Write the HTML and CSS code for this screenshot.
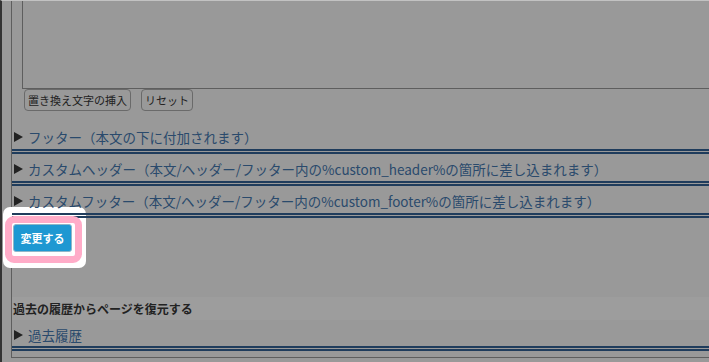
FILE: index.html
```html
<!DOCTYPE html>
<html lang="ja">
<head>
<meta charset="utf-8">
<link rel="stylesheet" href="styles.css">
</head>
<body>
<div class="page">
  <div class="panel">
    <div class="editor">
      <div class="textarea"></div>
      <div class="tools">
        <button class="tool">置き換え文字の挿入</button>
        <button class="tool">リセット</button>
      </div>
    </div>
    <div class="acc first">フッター（本文の下に付加されます）</div>
    <div class="acc">カスタムヘッダー（本文/ヘッダー/フッター内の%custom_header%の箇所に差し込まれます）</div>
    <div class="acc">カスタムフッター（本文/ヘッダー/フッター内の%custom_footer%の箇所に差し込まれます）</div>
    <div class="submit">
      <div class="spot"></div>
      <div class="ring"></div>
      <button class="save">変更する</button>
    </div>
    <div class="section-title">過去の履歴からページを復元する</div>
    <div class="acc history">過去履歴</div>
  </div>
</div>
</body>
</html>
```

FILE: styles.css
```css
html, body {
  margin: 0;
  padding: 0;
}
body {
  width: 709px;
  height: 362px;
  overflow: hidden;
  background: #999999;
  font-family: "Noto Sans CJK JP", "Noto Sans", sans-serif;
  font-size: 13.5px;
  color: #222;
}
.page {
  height: 361px;
  border-top: 1px solid #c2c2c2;
  border-left: 2px solid #333;
  padding-left: 9px;
}
.panel {
  border-left: 1px solid #5e5e5e;
  border-bottom: 1px solid #5e5e5e;
  padding-bottom: 6px;
}
.editor {
  padding-left: 10px;
}
.textarea {
  height: 87px;
  border-left: 1px solid #5e5e5e;
  border-bottom: 1px solid #5e5e5e;
}
.tools {
  display: flex;
  gap: 10px;
  padding: 0 0 0 2px;
}
.tool {
  font: inherit;
  font-size: 11px;
  line-height: 16px;
  color: #222;
  background: #999;
  border: 1px solid #6a6a6a;
  border-radius: 4px;
  padding: 2px 3px;
  height: 22px;
}
.acc {
  position: relative;
  z-index: 2;
  display: flex;
  align-items: center;
  padding: 5px 0 2px 2px;
  line-height: 20px;
  color: #2a4a6c;
  white-space: nowrap;
  border-bottom: 5px double #1f3c5c;
}
.acc::before {
  content: "";
  flex: none;
  width: 0;
  height: 0;
  margin-right: 5px;
  border-left: 9px solid #222;
  border-top: 5px solid transparent;
  border-bottom: 5px solid transparent;
}
.acc.first {
  padding-top: 16px;
}
.submit {
  position: relative;
  height: 73px;
  padding: 6px 0 0 1px;
}
.spot {
  position: absolute;
  z-index: 1;
  left: -9px;
  top: -11px;
  width: 83px;
  height: 61px;
  background: #fff;
  border-radius: 7px;
}
.ring {
  position: absolute;
  z-index: 2;
  left: -7px;
  top: -2px;
  width: 63px;
  height: 33px;
  border: 7px solid #ffacc8;
  border-radius: 9px;
  background: #fff;
}
.save {
  position: relative;
  z-index: 3;
  display: block;
  font: inherit;
  font-size: 11px;
  font-weight: bold;
  color: #fff;
  background: #1e98d2;
  border: 1px solid #8fb6c8;
  border-radius: 3px;
  width: 59px;
  height: 28px;
  padding: 0;
}
.section-title {
  font-weight: bold;
  font-size: 12px;
  line-height: 23px;
  background: #9d9d9d;
  padding-left: 1px;
}
.acc.history {
  padding-top: 5px;
  padding-bottom: 1px;
}
```
